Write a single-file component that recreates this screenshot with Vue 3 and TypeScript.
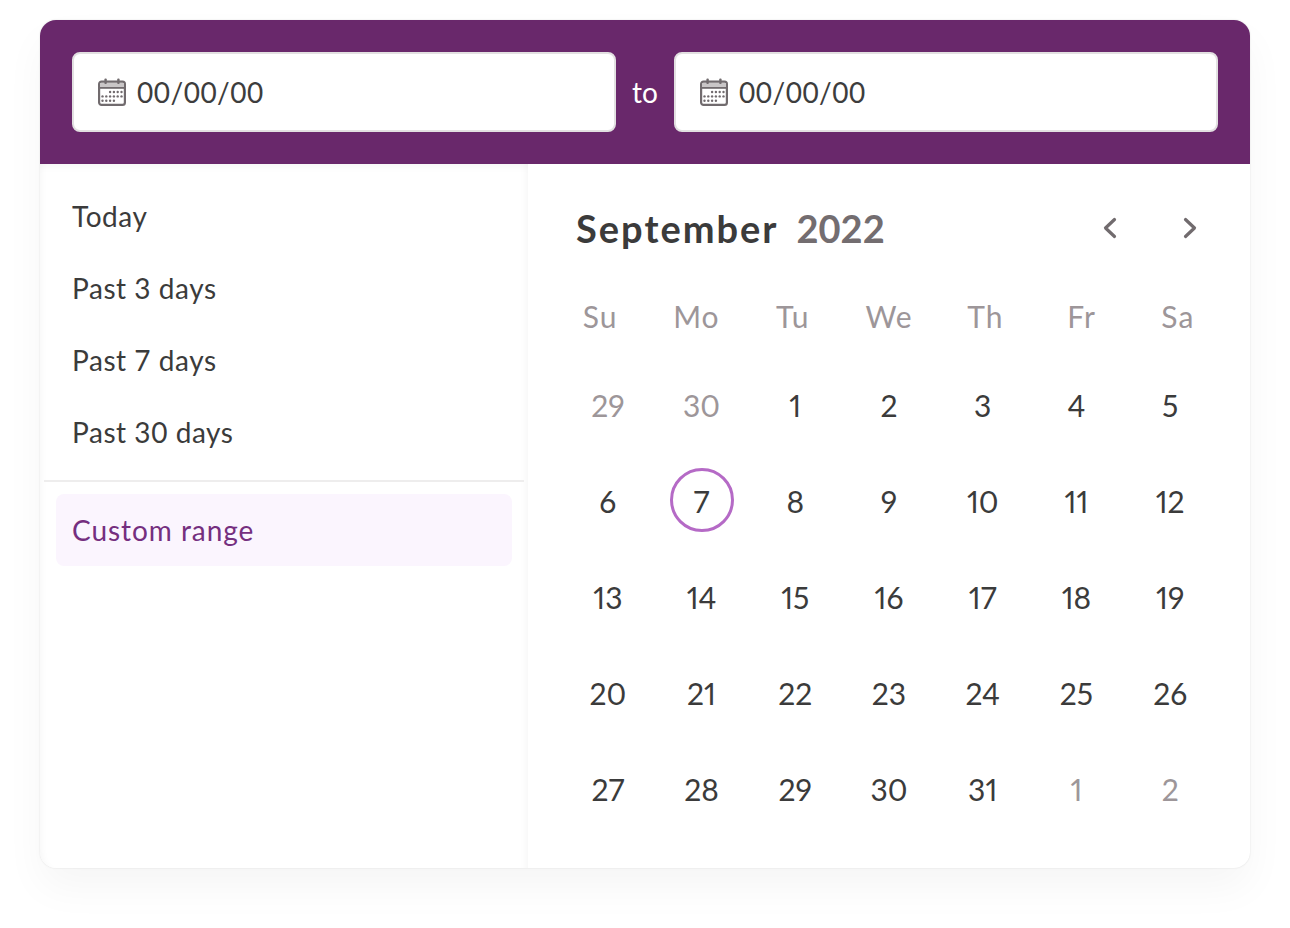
<script setup lang="ts">
const presets = ['Today', 'Past 3 days', 'Past 7 days', 'Past 30 days']
const week_days = ['Su', 'Mo', 'Tu', 'We', 'Th', 'Fr', 'Sa']

const days = [
  { label: 29, muted: true }, { label: 30, muted: true },
  ...Array.from({ length: 31 }, (_, i) => ({ label: i + 1, muted: false })),
  { label: 1, muted: true }, { label: 2, muted: true },
]
// calendar icon dots as [column, row]
const dots = [
  [2, 0], [3, 0], [4, 0], [5, 0],
  [0, 1], [1, 1], [2, 1], [3, 1], [4, 1], [5, 1],
  [0, 2], [1, 2], [2, 2], [3, 2],
]
</script>

<template>
  <div class="page">
    <div class="card">
      <header class="range">
        <div v-for="(n, i) in 2" :key="n" class="field-wrap">
          <span v-if="i === 1" class="to">to</span>
          <div class="field">
            <svg width="28" height="28" viewBox="0 0 28 28">
              <rect x="1.100" y="3.600" width="25.800" height="23.300" rx="2.400" fill="#fff" stroke="#716b6e" stroke-width="2.200" />
              <rect x="2" y="5" width="24" height="4" fill="#c9c6c7" />
              <rect x="2" y="9" width="24" height="1.800" fill="#716b6e" />
              <rect x="6.400" y="0.500" width="2.400" height="5.500" rx="1" fill="#716b6e" />
              <rect x="19.200" y="0.500" width="2.400" height="5.500" rx="1" fill="#716b6e" />
              <circle v-for="d in dots" :key="d.join()" :cx="4.500 + d[0] * 3.800" :cy="14 + d[1] * 4.400" r="1.200" fill="#716b6e" />
            </svg>
            <span class="date">00/00/00</span>
          </div>
        </div>
      </header>

      <div class="body">
        <aside class="side">
          <ul class="presets">
            <li v-for="p in presets" :key="p">{{ p }}</li>
          </ul>
          <hr class="rule">
          <div class="custom">Custom range</div>
        </aside>

        <section class="calendar">
          <div class="month">
            <h2>September<span>2022</span></h2>
            <div class="arrows">
              <svg width="20" height="24" viewBox="0 0 20 24"><path d="M14.500 3.500 5.500 12 14.500 20.500" /></svg>
              <svg width="20" height="24" viewBox="0 0 20 24"><path d="M5.500 3.500 14.500 12 5.500 20.500" /></svg>
            </div>
          </div>
          <div class="weeks">
            <span v-for="w in week_days" :key="w">{{ w }}</span>
          </div>
          <div class="days">
            <div v-for="(d, i) in days" :key="i" class="day" :class="{ muted: d.muted }">
              <span v-if="!d.muted && d.label === 7" class="today" />
              <span class="num">{{ d.label }}</span>
            </div>
          </div>
        </section>
      </div>
    </div>
  </div>
</template>

<style scoped>
  .page {
    width: 1290px;
    height: 928px;
    padding: 20px 40px 0;
    box-sizing: border-box;
    background: #fff;
    font-family: 'Lato', 'Open Sans', sans-serif;
    color: #3b3b3b;
    overflow: hidden;
  }

  .card {
    height: 848px;
    border-radius: 16px;
    background: #fff;
    box-shadow: 0 20px 40px rgba(0, 0, 0, 0.04), 0 0 2px rgba(0, 0, 0, 0.12);
  }

  .range {
    display: flex;
    height: 144px;
    padding: 32px;
    box-sizing: border-box;
    background: #69286b;
    border-radius: 16px 16px 0 0;
  }

  .field-wrap {
    display: flex;
    align-items: center;
  }

  .to {
    width: 58px;
    text-align: center;
    font-size: 28px;
    line-height: 80px;
    color: #fff;
  }

  .field {
    display: flex;
    align-items: center;
    gap: 11px;
    width: 544px;
    height: 80px;
    padding-left: 24px;
    box-sizing: border-box;
    background: #fff;
    border: 2px solid #e2e0e1;
    border-radius: 8px;
  }

  .date {
    font-size: 28px;
    letter-spacing: 0.5px;
    color: #3d3d3d;
  }

  .body {
    display: flex;
    height: 704px;
  }

  .side {
    width: 488px;
    flex: none;
    padding: 16px 4px 0;
    box-sizing: border-box;
    border-radius: 0 0 0 16px;
    background: #fff;
    box-shadow: inset 0 12px 12px -12px rgba(0, 0, 0, 0.06), inset -10px 0 10px -10px rgba(0, 0, 0, 0.06), inset 8px 0 8px -8px rgba(0, 0, 0, 0.05);
  }

  .presets {
    list-style: none;
    margin: 0;
    padding: 0;
  }

  .presets li {
    height: 72px;
    padding-left: 28px;
    font-size: 28px;
    line-height: 72px;
    letter-spacing: 0.55px;
  }

  .rule {
    height: 2px;
    margin: 12px 0 12px;
    border: 0;
    background: #eeeded;
  }

  .custom {
    height: 72px;
    margin: 0 12px;
    padding-left: 16px;
    font-size: 28px;
    line-height: 72px;
    letter-spacing: 0.95px;
    color: #752f7f;
    background: #fbf5fe;
    border-radius: 8px;
  }

  .calendar {
    flex: 1;
    padding: 0 24px;
  }

  .month {
    display: flex;
    align-items: center;
    justify-content: space-between;
    height: 128px;
    padding: 0 26px 0 24px;
  }

  .month h2 {
    margin: 0;
    font-size: 38px;
    font-weight: 700;
    letter-spacing: 2px;
    color: #3b3b3b;
  }

  .month h2 span {
    margin-left: 18px;
    letter-spacing: 0;
    color: #736d70;
  }

  .arrows {
    display: flex;
    gap: 60px;
  }

  .arrows path {
    fill: none;
    stroke: #716b6e;
    stroke-width: 3.2;
    stroke-linecap: round;
    stroke-linejoin: round;
  }

  .weeks {
    display: grid;
    grid-template-columns: repeat(7, 1fr);
    height: 48px;
    font-size: 30px;
    line-height: 48px;
    letter-spacing: 1px;
    text-align: center;
    color: #9d9699;
  }

  .days {
    display: grid;
    grid-template-columns: repeat(7, 1fr);
    grid-auto-rows: 96px;
    margin: 17px 9px 0;
  }

  .day {
    position: relative;
    display: flex;
    align-items: center;
    justify-content: center;
    font-size: 30px;
    font-variant-numeric: proportional-nums;
  }

  .day.muted {
    color: #9d9699;
  }

  .num {
    position: relative;
  }

  .today {
    position: absolute;
    top: 15px;
    left: 50%;
    width: 64px;
    height: 64px;
    box-sizing: border-box;
    transform: translateX(-50%);
    border: 3.5px solid #b56ac6;
    border-radius: 50%;
  }
</style>
